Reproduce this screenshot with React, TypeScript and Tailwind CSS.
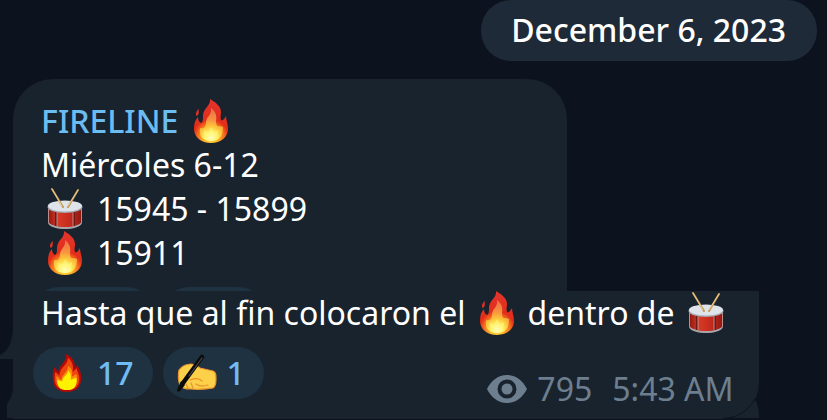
import React from "react";

function Fire() {
  return (
    <svg viewBox="0 0 36 44" className="h-11 w-9 shrink-0" role="img" aria-label="fire">
      <defs>
        <radialGradient id="flameOuter" cx="18" cy="38" r="34" gradientUnits="userSpaceOnUse">
          <stop offset="0" stopColor="#fff04a" />
          <stop offset="0.2" stopColor="#fdbb2d" />
          <stop offset="0.38" stopColor="#f4711f" />
          <stop offset="0.52" stopColor="#e32d1a" />
          <stop offset="1" stopColor="#e2342a" />
        </radialGradient>
        <radialGradient id="flameInner" cx="18" cy="39" r="28" gradientUnits="userSpaceOnUse">
          <stop offset="0" stopColor="#ffffe8" />
          <stop offset="0.2" stopColor="#fff668" />
          <stop offset="0.42" stopColor="#fdc43a" />
          <stop offset="0.65" stopColor="#f79340" />
          <stop offset="1" stopColor="#ee7446" />
        </radialGradient>
      </defs>
      <path fill="url(#flameOuter)" d="M17 0c5 3 11 7 11 13 0 3-1 5 0 8 1 1 2 0 3-1l2-3c0 4 2 8 2 13 0 8-7 14-17 14S1 38 1 30c0-5 1-9 4-12 0 3 1 5 3 6 2-1 2-4 2-7 0-8 8-10 7-17ZM6 10c-1 3 1 4-2 7-2-1-1-5 2-7Z" />
      <path fill="url(#flameInner)" d="M18 9c5 4 6 8 5 13 0 4 1 6 4 5l3 1c0 8-3 14-12 14S6 37 7 29c4 1 6-1 6-5 0-7 6-7 5-15Z" />
      <path fill="#fff88a" fillOpacity="0.5" d="m18 28 3 5 4-2c0 6-2 11-7 11s-8-5-7-11l4 3Z" />
    </svg>
  );
}

function FlatFire() {
  return (
    <svg viewBox="0 0 32 40" className="h-[38px] w-10 shrink-0" role="img" aria-label="fire">
      <path fill="#b00a08" d="M15 0c8 4 10 9 9 15l3-4c1 4 4 7 4 14 0 10-6 15-15 15S1 35 1 26c0-6 0-8 2-12l4 5c0-8 9-10 8-19Z" />
      <path fill="#f04410" d="M17 4c5 4 6 9 5 15l4-4c1 4 3 7 3 11 0 8-5 12-13 12S3 34 3 26c0-3 0-6 1-7l4 4c0-9 9-11 9-19Z" />
      <path fill="#fb8f0d" d="M17 12c5 4 5 7 4 12l5-3c2 10-2 16-10 16S4 32 5 23l5 5c0-7 8-9 7-16Z" />
      <path fill="#fff200" d="M17 17c4 4 3 7 3 10l6-2c1 8-2 13-10 13S5 33 6 27l5 2c0-6 6-6 6-12Z" />
    </svg>
  );
}

function Drum() {
  return (
    <svg viewBox="0 0 36 44" className="h-11 w-9 shrink-0" role="img" aria-label="drum">
      <defs>
        <linearGradient id="drumShell">
          <stop offset="0" stopColor="#8e1710" />
          <stop offset="0.3" stopColor="#d63a26" />
          <stop offset="0.65" stopColor="#c42a1d" />
          <stop offset="1" stopColor="#8e1710" />
        </linearGradient>
      </defs>
      <path fill="#a9a4a8" d="M1 32v4c3 8 31 8 34 0v-4Z" />
      <path fill="url(#drumShell)" d="M1 20v14c3 8 31 8 34 0V20Z" />
      <path fill="none" stroke="#6b1a18" strokeWidth="2" d="M9 25v14M27 25v14" />
      <path fill="none" stroke="#c9a9a7" strokeWidth="0.800" d="M10 25v14M26 25v14M1.500 22v13M34.500 22v13" />
      <ellipse cx="18" cy="20" rx="17.500" ry="6" fill="#a3a9b3" />
      <ellipse cx="18" cy="19" rx="17" ry="5.500" fill="#dfe3ea" />
      <path stroke="#bd9350" strokeWidth="2" strokeLinecap="round" d="m5 2 11 18M31 3 21 20" />
      <path stroke="#f2d9a2" strokeWidth="0.900" strokeLinecap="round" d="m5 2 10 17M31 3 21 19" />
    </svg>
  );
}

function WritingHand() {
  return (
    <svg viewBox="0 0 40 38" className="h-[38px] w-10 shrink-0" role="img" aria-label="writing hand">
      <path fill="#fdd04a" stroke="#e9922e" strokeWidth="1.200" strokeLinejoin="round" d="M2 16c3-4 8-6 12-6 4 0 6 2 9 4l13 3c3 1 3 4 3 8 0 5-1 8-3 9-7 1-13 2-22 1-5 0-10-1-11-4-2-4-2-11-1-15Z" />
      <path fill="none" stroke="#e9922e" strokeWidth="1.200" strokeLinecap="round" d="M13 26c5-2 9-2 12 1M9 30l2 4M14 29l2 5M19 30c3 2 7 3 12 1" />
      <path stroke="#0b0b0c" strokeWidth="4.500" strokeLinecap="round" d="M25 3 6 29" />
      <path stroke="#4a4a4c" strokeWidth="1.200" strokeLinecap="round" d="M25 4 12 22" />
      <path fill="#0b0b0c" d="M4 27 0 36c0 2 1 2 3 1l5-6Z" />
    </svg>
  );
}

function Eye() {
  return (
    <svg viewBox="0 0 40 28" className="h-7 w-10 shrink-0" role="img" aria-label="views">
      <path fill="#6d7f8f" fillRule="evenodd" d="M20 0c9 0 16 6 20 14-4 8-11 14-20 14S4 22 0 14C4 6 11 0 20 0Zm0 4.500a9.500 9.500 0 1 0 0 19 9.500 9.500 0 0 0 0-19Z" />
      <circle cx="20" cy="14" r="5.500" fill="#6d7f8f" />
    </svg>
  );
}

function BubbleTails() {
  return (
    <svg viewBox="0 0 13 128" className="absolute bottom-0 -left-[13px] h-32 w-[13px]" aria-hidden="true">
      <path fill="#18232e" d="M13 36v32H0v-4c8-3 13-14 13-28ZM13 96v31H7v-14c3-4 6-10 6-17Z" />
    </svg>
  );
}

function NextBubbleCorner() {
  return (
    <svg viewBox="0 0 40 40" className="absolute right-0 bottom-0 size-10" aria-hidden="true">
      <path fill="#18232e" d="M35 19c4 6 5 12 5 19v1H6c13-1 23-7 29-20Z" />
      <path fill="none" stroke="#0d131e" d="M4 39.500c14 0 26-8 32-20" />
    </svg>
  );
}

function Reaction({ count, children }: { count: number; children: React.ReactNode }) {
  return (
    <button type="button" className="flex h-[52px] items-center gap-[10px] rounded-full bg-[#1e3242] pr-[19px] pl-[14px] font-medium text-[#70baf5]">
      {children}
      <span>{count}</span>
    </button>
  );
}

export default function App() {
  return (
    <main className="min-h-screen overflow-hidden bg-[#0d131e] font-['Noto_Sans','Open_Sans',sans-serif] text-[32px] leading-[44px] text-white">
      <header className="flex justify-end pr-[10px]">
        <time dateTime="2023-12-06" className="rounded-[30px] bg-[#1e2a38] pt-2 pr-[31px] pb-[9px] pl-[30px] font-medium">
          December 6, 2023
        </time>
      </header>
      <article className="mt-[18px] ml-[13px] w-fit">
        <section className="w-[554px] overflow-hidden rounded-t-[40px] bg-[#18232e] pt-5 pl-5">
          <h1 className="flex items-center gap-[15px] pl-2 font-medium text-[#6bbcf0]">
            FIRELINE <Fire />
          </h1>
          <p className="pl-2">Miércoles 6-12</p>
          <p className="flex items-center gap-[14px] pl-[14px]">
            <Drum /> 15945 - 15899
          </p>
          <p className="flex items-center gap-[14px] pl-[14px]">
            <Fire /> 15911
          </p>
          <div className="flex h-4 gap-[10px] overflow-hidden pt-3" aria-hidden="true">
            <span className="h-[52px] w-[120px] shrink-0 rounded-full bg-[#1e3242]" />
            <span className="h-[52px] w-[102px] shrink-0 rounded-full bg-[#1e3242]" />
          </div>
        </section>
        <section className="relative rounded-br-[36px] bg-[#18232e] pr-[25px] pb-2 pl-5">
          <BubbleTails />
          <NextBubbleCorner />
          <p className="flex items-center gap-[13px] pr-[10px] pl-2 whitespace-nowrap">
            Hasta que al fin colocaron el <Fire /> dentro de <Drum />
          </p>
          <footer className="mt-3 flex items-start gap-[10px]">
            <Reaction count={17}>
              <FlatFire />
            </Reaction>
            <Reaction count={1}>
              <WritingHand />
            </Reaction>
            <div className="mt-5 ml-auto flex items-center gap-[10px] text-[#6d7f8f]">
              <Eye />
              <span>795</span>
              <time dateTime="05:43" className="ml-[10px]">
                5:43 AM
              </time>
            </div>
          </footer>
        </section>
      </article>
    </main>
  );
}
